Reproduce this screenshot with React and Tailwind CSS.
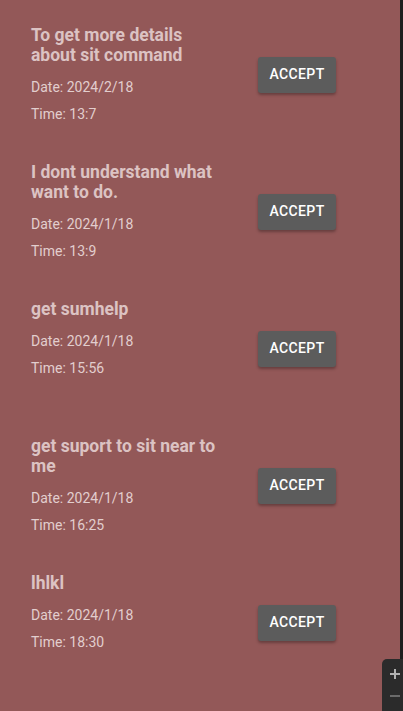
import React from "react";

const items = [
  { title: "To get more details about sit command", date: "2024/2/18", time: "13:7" },
  { title: "I dont understand what want to do.", date: "2024/1/18", time: "13:9" },
  { title: "get sumhelp", date: "2024/1/18", time: "15:56" },
  { title: "get suport to sit near to me", date: "2024/1/18", time: "16:25" },
  { title: "lhlkl", date: "2024/1/18", time: "18:30" },
];

export default function App() {
  return (
    <div className="relative flex h-[711px] w-[403px] overflow-hidden bg-[#935858]" style={{ fontFamily: "Roboto, 'Liberation Sans', sans-serif" }}>
      <div className="flex w-[400px] flex-col pt-[6px]">
        {items.map((it, i) => (
          <div key={i} className="relative flex h-[137px] items-center">
            <div className="flex w-[227px] flex-col self-start pl-[31px] pr-[6px] pt-[19px]">
              <div className="w-[190px] text-[17.5px] font-bold leading-[20px] text-[#dcc3c3]">{it.title}</div>
              <div className="mt-[12px] text-[14px] leading-[20px] text-[#e2cece]">Date: {it.date}</div>
              <div className="mt-[7px] text-[14px] leading-[20px] text-[#e2cece]">Time: {it.time}</div>
            </div>
            <button className="ml-[31px] flex h-[36px] w-[78px] items-center justify-center rounded-[3px] bg-[#5c5c5c] text-[14px] font-medium tracking-[0.4px] text-white shadow-[0_2px_3px_rgba(0,0,0,0.3)]">
              ACCEPT
            </button>
          </div>
        ))}
      </div>
      <div className="w-[3px] bg-[#1e1e1e]" />
      <div className="absolute left-[382px] top-[659px] flex h-[60px] w-[30px] flex-col items-start rounded-tl-[5px] bg-[#2b2b2b] pl-[8px]">
        <svg className="mt-[10px]" width="10" height="10" viewBox="0 0 10 10">
          <path d="M5 0V10M0 5H10" stroke="#b0b0b0" strokeWidth="2" />
        </svg>
        <div className="mt-[16px] h-[2px] w-[10px] bg-[#6a6a6a]" />
      </div>
    </div>
  );
}
